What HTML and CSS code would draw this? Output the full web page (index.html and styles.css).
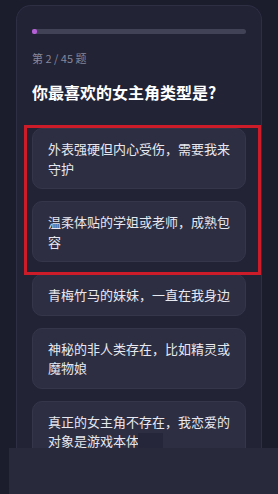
FILE: index.html
```html
<!DOCTYPE html>
<html lang="zh-CN">
<head>
    <meta charset="UTF-8">
    <meta name="viewport" content="width=device-width, initial-scale=1.0">
    <title>测验</title>
    <link rel="stylesheet" href="styles.css">
</head>
<body>
    <!-- Quiz card -->
    <div class="quiz-card">
        <div class="progress">
            <div class="progress-fill"></div>
        </div>
        <div class="question-count">第 2 / 45 题</div>
        <h1 class="question">你最喜欢的女主角类型是?</h1>

        <div class="options">
            <button class="option">外表强硬但内心受伤，需要我来守护</button>
            <button class="option">温柔体贴的学姐或老师，成熟包容</button>
            <button class="option">青梅竹马的妹妹，一直在我身边</button>
            <button class="option">神秘的非人类存在，比如精灵或魔物娘</button>
            <button class="option">真正的女主角不存在，我恋爱的对象是游戏本体</button>
        </div>
    </div>

    <!-- Red highlight around first two answers -->
    <div class="highlight"></div>

    <!-- Bottom cover -->
    <div class="patch"></div>
    <div class="bottom-bar"></div>
</body>
</html>
```

FILE: styles.css
```css
html {
    overflow: hidden;
}

body {
    font-family: "Noto Sans CJK SC", "Noto Sans", sans-serif;
    margin: 0;
    padding: 0;
    height: 494px;
    overflow: hidden;
    background: #1b1c2c;
    position: relative;
}

/* Card */
.quiz-card {
    box-sizing: border-box;
    height: 489px;
    overflow: hidden;
    margin: 5px 16px 0 16px;
    padding: 23px 15px 0 15px;
    background: #222335;
    border: 1px solid #2e2f43;
    border-bottom: none;
    border-radius: 15px 15px 0 0;
}

.progress {
    height: 5px;
    border-radius: 3px;
    background: #414255;
}

.progress-fill {
    width: 5px;
    height: 5px;
    border-radius: 2px;
    background: #b45fd6;
}

.question-count {
    margin-top: 16px;
    font-size: 11px;
    line-height: 16px;
    color: #86879a;
}

.question {
    margin: 15px 0 0 0;
    font-size: 16px;
    line-height: 22px;
    font-weight: bold;
    color: #ffffff;
}

/* Answer options */
.options {
    margin-top: 25px;
    display: flex;
    flex-direction: column;
    gap: 12px;
}

.option {
    display: block;
    width: 100%;
    text-align: left;
    font-family: inherit;
    font-size: 13px;
    line-height: 19.5px;
    color: #e8e8f0;
    background: #2d2e41;
    border: 1px solid #35364a;
    border-radius: 10px;
    padding: 10px 14px 10px 15px;
}

/* Red annotation box */
.highlight {
    position: absolute;
    left: 24px;
    top: 125px;
    width: 231px;
    height: 144px;
    border: 3px solid #cc1c2a;
}

/* Bottom overlays */
.patch {
    position: absolute;
    left: 138px;
    top: 433px;
    width: 25px;
    height: 15px;
    background: #25263a;
}

.bottom-bar {
    position: absolute;
    left: 9px;
    right: 0;
    top: 448px;
    bottom: 0;
    background: #282a3c;
}
```
